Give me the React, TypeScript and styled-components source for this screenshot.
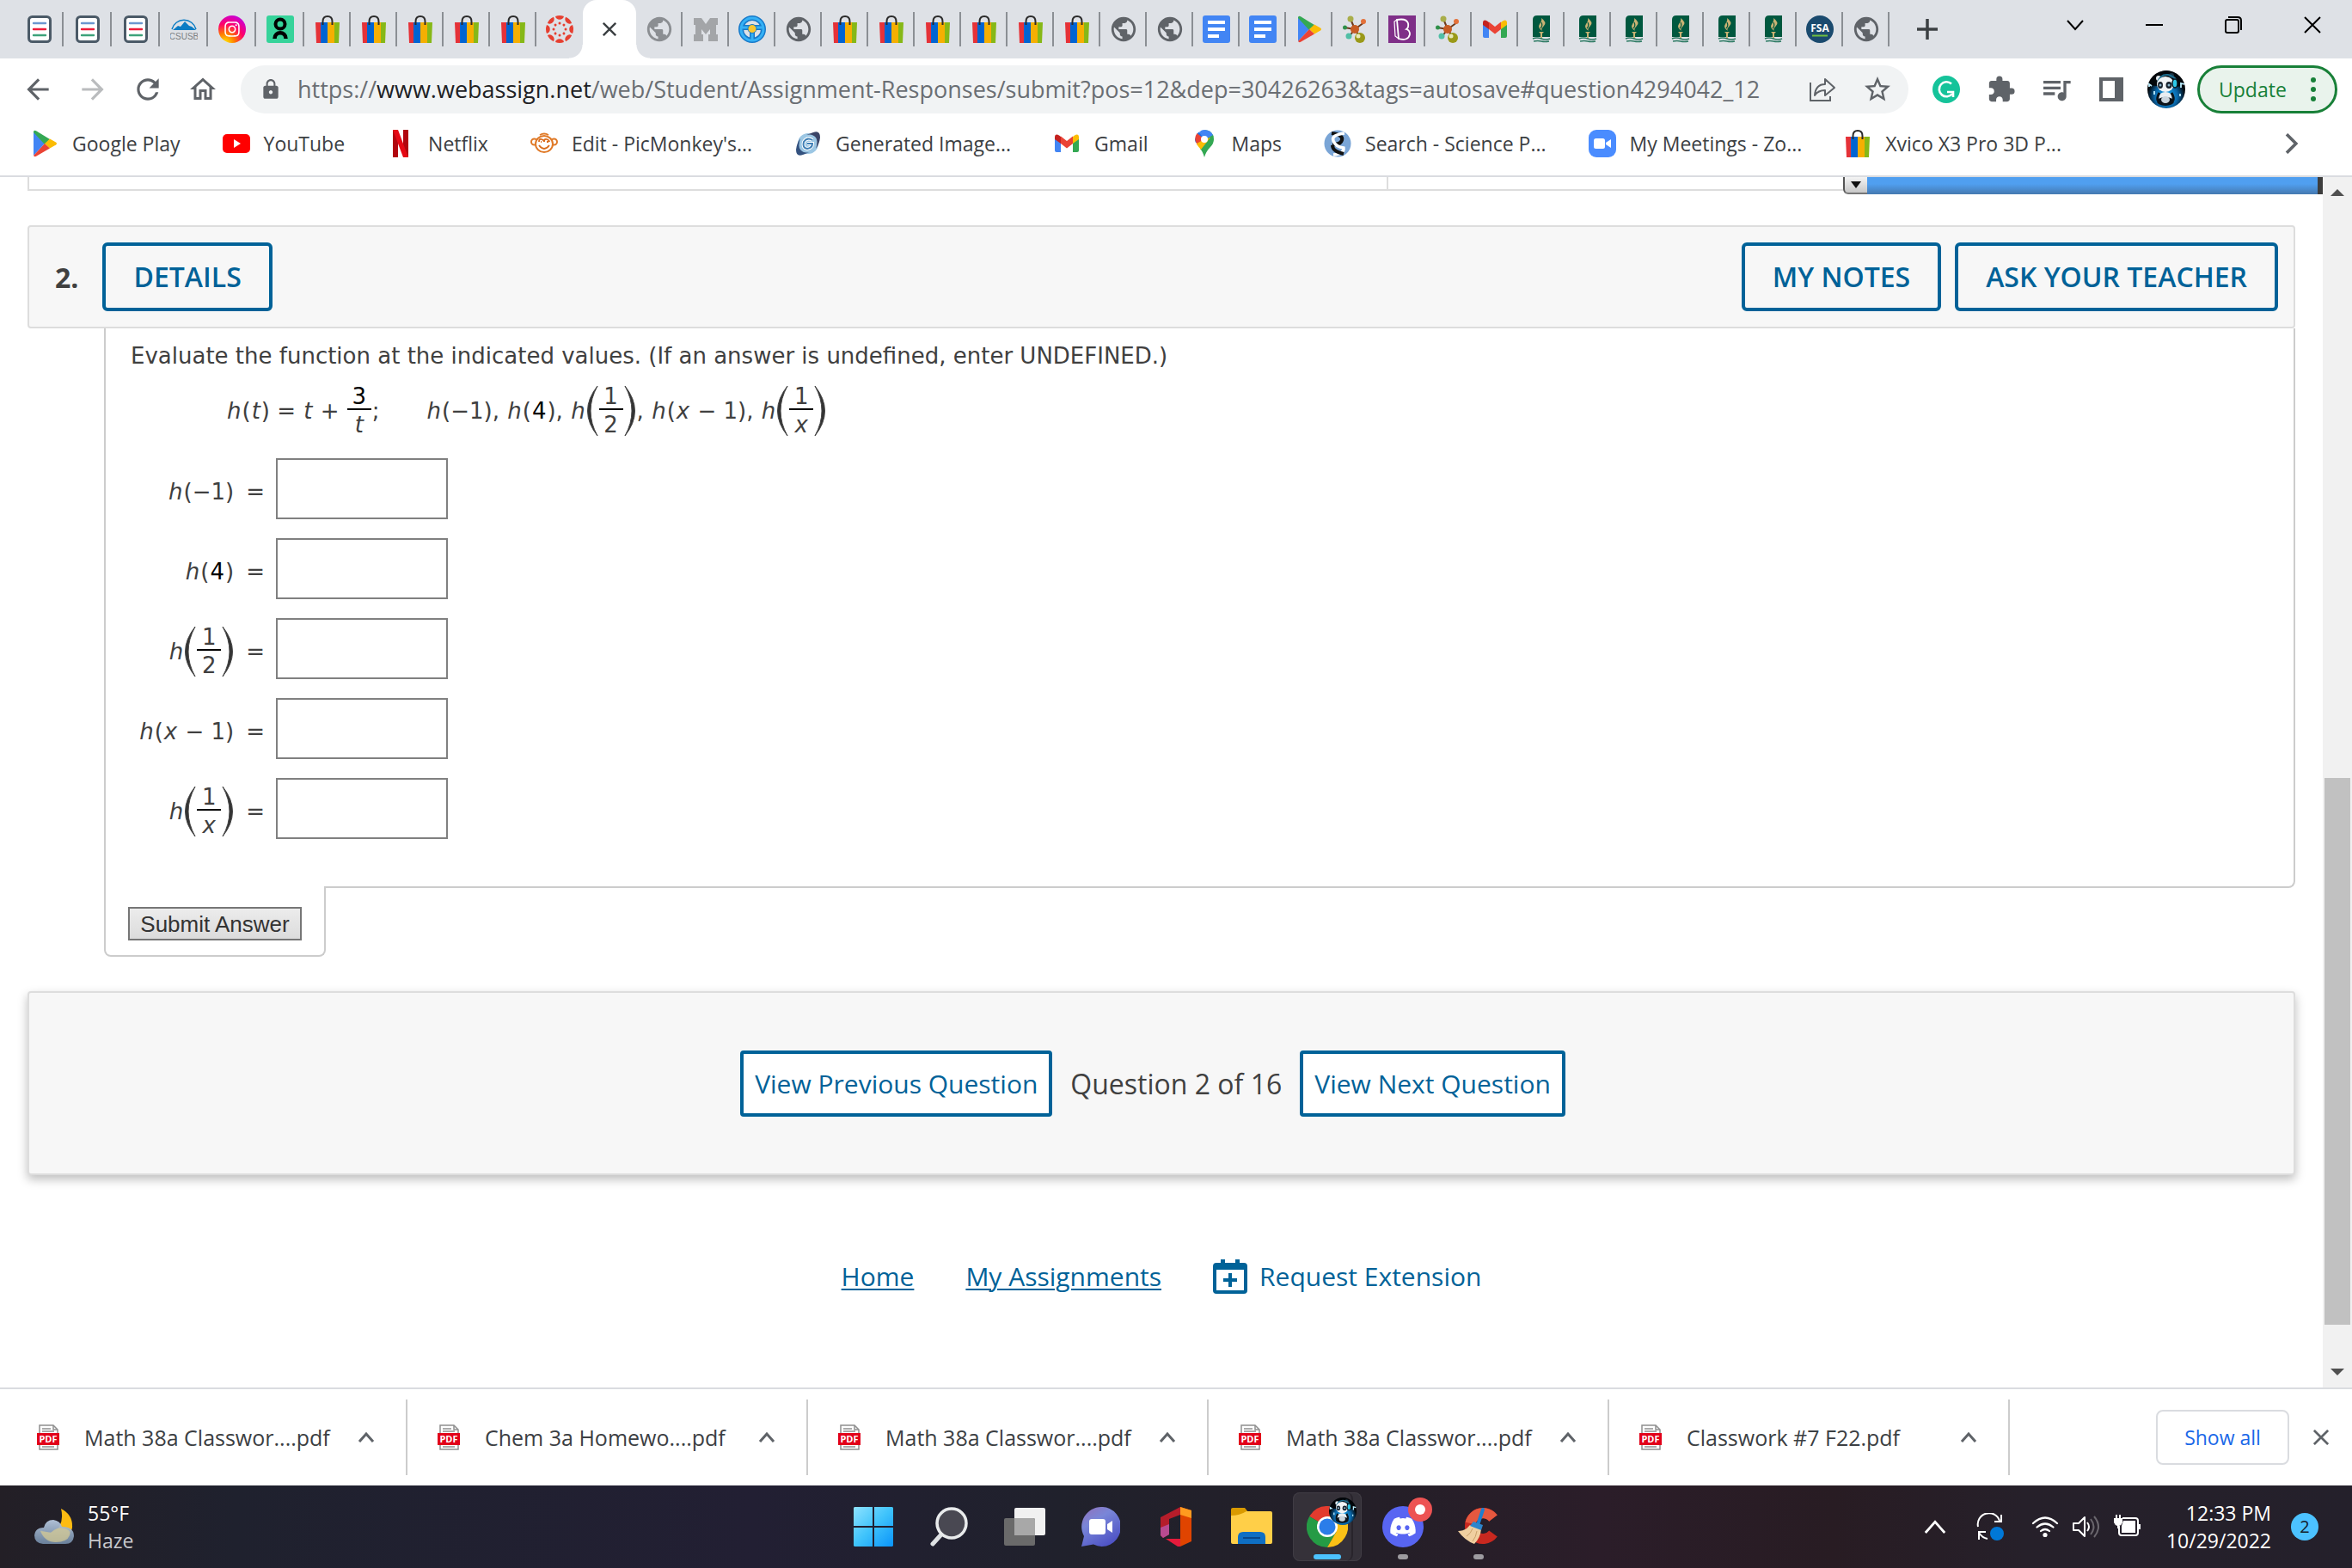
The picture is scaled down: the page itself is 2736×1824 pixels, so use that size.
import React from "react";
import styled, { createGlobalStyle } from "styled-components";
import {
  MdArrowBack,
  MdArrowForward,
  MdExtension,
  MdLock,
  MdOutlineHome,
  MdPublic,
  MdQueueMusic,
  MdRefresh,
  MdStarBorder,
} from "react-icons/md";
import { FaDiscord, FaInstagram } from "react-icons/fa6";

const ui = `"Open Sans", "Noto Sans", sans-serif`;
const math = `"DejaVu Sans", sans-serif`;
const blue = "#006298";
const ink = "#404040";
const chromeGrey = "#5f6368";

const GlobalStyle = createGlobalStyle`
  *, *::before, *::after { box-sizing: border-box; }
  body { margin: 0; background: #fff; font-family: ${ui}; }
  button { font: inherit; color: inherit; background: none; border: 0; padding: 0; margin: 0; }
  svg { display: block; flex: none; }
`;

/* ---------- icons ---------- */

const Svg = ({ size = 32, box = 32, children }: { size?: number; box?: number; children: React.ReactNode }) => (
  <svg width={size} height={size} viewBox={`0 0 ${box} ${box}`} fill="none" aria-hidden="true">
    {children}
  </svg>
);

const ListIcon = () => (
  <Svg>
    <rect x="3.5" y="1.5" width="25" height="29" rx="4" fill="#fff" stroke="#4b5a67" strokeWidth="3" />
    <path d="M9 9h14" stroke="#6c97cf" strokeWidth="2.4" strokeLinecap="round" />
    <path d="M9 16h14" stroke="#ee1c3a" strokeWidth="2.4" strokeLinecap="round" />
    <path d="M9 23h14" stroke="#3da27a" strokeWidth="2.4" strokeLinecap="round" />
  </Svg>
);
const CsusbIcon = () => (
  <Svg>
    <path d="M2 16A14.5 14.5 0 0 1 30 16" stroke="#0b7cc4" strokeWidth="1.5" />
    <path d="M3 17L9 12l3 1 5-6 5 5 3 1 5 4Z" fill="#0b7cc4" />
    <text x="16" y="28" fontSize="10" textAnchor="middle" fontFamily="Liberation Sans Narrow, Liberation Sans" fill="#7c7f83">CSUSB</text>
  </Svg>
);
const InstaBadge = styled.span`
  display: grid;
  place-items: center;
  width: 32px;
  height: 32px;
  border-radius: 50%;
  color: #fff;
  font-size: 20px;
  background: radial-gradient(circle at 25% 100%, #ffd600 5%, #ff7a00 28%, #ff0069 55%, #d300c5 80%, #7638fa 100%);
`;
const KeyIcon = () => (
  <Svg>
    <rect width="32" height="32" rx="3" fill="#36d39a" />
    <circle cx="16" cy="10" r="5.5" stroke="#000" strokeWidth="4" />
    <path d="M9.5 27c0-9 13-9 13 0" stroke="#000" strokeWidth="4.5" />
  </Svg>
);
const BagIcon = () => (
  <Svg>
    <path d="M10.5 12V7q0-6 5.500-6t5.500 6v5" stroke="#2b2b2b" strokeWidth="2" />
    <path d="M2 8h7v24H3Z" fill="#e53238" />
    <path d="M8 8h8v24H8Z" fill="#0064d2" />
    <path d="M16 8h8v24h-8Z" fill="#f5af02" />
    <path d="M24 8h6l-1 24h-5Z" fill="#86b817" />
    <path d="M10.5 8v3M21.5 8v3" stroke="#2b2b2b" strokeWidth="2" />
  </Svg>
);
const CanvasIcon = () => (
  <Svg>
    {[0, 45, 90, 135, 180, 225, 270, 315].map((a) => (
      <g key={a} transform={`rotate(${a} 16 16)`} fill="#e63f30">
        <path d="M11 1Q16-1 21 1A5.200 5.200 0 0 1 11 1Z" />
        <circle cx="16" cy="9" r="1.5" />
      </g>
    ))}
  </Svg>
);
const GlobeIcon = ({ faded }: { faded?: boolean }) => <MdPublic size={34} color={faded ? "#8b8e92" : chromeGrey} />;
const BlockMIcon = () => (
  <Svg>
    <path d="M2 3h9l5 7 5-7h9v8h-2v11h2v8H19v-8h2v-6l-5 6-5-6v6h2v8H2v-8h2V11H2Z" fill="#a3a5a8" />
  </Svg>
);
const WheelIcon = () => (
  <Svg>
    <circle cx="16" cy="16" r="13" stroke="#1779c9" strokeWidth="6" />
    <path d="M4 14h24M16 17v12" stroke="#1779c9" strokeWidth="6" />
    <circle cx="16" cy="16" r="13" stroke="#35b1f5" strokeWidth="3" />
    <path d="M4 14h24M16 17v12" stroke="#35b1f5" strokeWidth="3" />
    <circle cx="16" cy="15.5" r="5" fill="#f9c62f" stroke="#1779c9" />
  </Svg>
);
const DocsIcon = () => (
  <Svg>
    <rect width="32" height="32" rx="3" fill="#4285f4" />
    <path d="M6 8h20M6 16h20M6 24h13" stroke="#fff" strokeWidth="4" />
  </Svg>
);
const PlayIcon = () => (
  <Svg>
    <path d="M3 2v28L16 16Z" fill="#4285f4" />
    <path d="M3 2q1-2 3.500-.5L22 11l-6 6L3 3Z" fill="#34a853" />
    <path d="M22 10.500l7 4q2 1.500 0 3l-7 4L16 16Z" fill="#fbbc04" />
    <path d="M3 30q1 2 3.500.5L22 21.500 16 16Z" fill="#ea4335" />
  </Svg>
);
const MoleculeIcon = () => (
  <Svg>
    <path d="M10 4l5 12M26 8l-11 8M3 14l12 2M8 25l7-9 6 9" stroke="#6d3a1c" strokeWidth="2" />
    <circle cx="10" cy="4" r="3.500" fill="#a9ae4a" />
    <circle cx="25" cy="7" r="3" fill="#e4713a" />
    <circle cx="3.500" cy="14" r="2.500" fill="#2f8f49" />
    <circle cx="15" cy="16" r="5" fill="#c75b24" />
    <circle cx="8" cy="24" r="3.500" fill="#51bfa6" />
    <circle cx="21" cy="26" r="6" fill="#9a9918" />
    <circle cx="19" cy="24" r="2.500" fill="#e8e8b8" />
  </Svg>
);
const BIcon = () => (
  <Svg>
    <rect width="32" height="32" fill="#7f2f88" />
    <path d="M10 5l2 22q11 3 13-5 0-5-4-6 3-2 2-7-2-6-13-4Z" stroke="#fff" strokeWidth="1.800" />
    <path d="M10 5L7 7l1 17 4 3" stroke="#fff" strokeWidth="1.200" />
  </Svg>
);
const GmailIcon = () => (
  <Svg>
    <path d="M2 8v16q0 2 2 2h5V12.500Z" fill="#4285f4" />
    <path d="M30 8v16q0 2-2 2h-5V12.500Z" fill="#34a853" />
    <path d="M23 8l2-1.600Q30 4 30 9v2l-7 5Z" fill="#fbbc04" />
    <path d="M2 9Q2 4 7 6.400l2 1.600v8l-7-5Z" fill="#c5221f" />
    <path d="M9 7.500l7 5.500 7-5.500V16l-7 5.500L9 16Z" fill="#ea4335" />
  </Svg>
);
const TorchIcon = () => (
  <Svg>
    <path d="M6 25V5q0-5 5-5h15v25Z" fill="#00583f" />
    <path d="M16 3q7 5 3 9t-2 6q-6-4-3-8t2-7Z" fill="#c9b273" />
    <path d="M16 8q2 4-1 7" stroke="#00583f" strokeWidth="1.200" />
    <path d="M13 19h6l-2 2v6h-2v-6Z" fill="#c9b273" />
    <path d="M6 27q5-2 10 0t10 0M7 30q5-1 9 0t9 0" stroke="#2c7a63" strokeWidth="1.600" />
  </Svg>
);
const FsaIcon = () => (
  <Svg>
    <circle cx="16" cy="16" r="16" fill="#1a4a6e" />
    <text x="16" y="19" fontSize="12" fontWeight="700" textAnchor="middle" fontFamily="Open Sans" fill="#fff">FSA</text>
    <path d="M7 23.500h18" stroke="#6fbf3f" strokeWidth="2" />
  </Svg>
);
const YoutubeIcon = () => (
  <Svg>
    <rect y="5" width="32" height="22" rx="5" fill="#f00" />
    <path d="M13 11l8 5-8 5Z" fill="#fff" />
  </Svg>
);
const NetflixIcon = () => (
  <Svg>
    <path d="M7 0h6v32H7ZM19 0h6v32h-6Z" fill="#b1060f" />
    <path d="M7 0h6l12 32h-6Z" fill="#e50914" />
  </Svg>
);
const MonkeyIcon = () => (
  <Svg>
    <circle cx="4.500" cy="14" r="3.500" stroke="#e07a28" strokeWidth="2" />
    <circle cx="27.500" cy="14" r="3.500" stroke="#e07a28" strokeWidth="2" />
    <ellipse cx="16" cy="16.500" rx="10" ry="9.500" fill="#fff" stroke="#e07a28" strokeWidth="2" />
    <path d="M10 14q0-4 3-3t3 3q0-4 3-3t3 3M10 18q6 8 12 0M12 14h1M19 14h2" stroke="#d96b1c" strokeWidth="1.800" />
    <path d="M11 6q5-3 10 0" stroke="#e07a28" strokeWidth="2" />
  </Svg>
);
const SwirlIcon = () => (
  <Svg>
    <circle cx="16" cy="16" r="12" fill="#9cc7e4" />
    <path d="M22 3q8-3 8 6-1 8-5 13 3-9 0-13-4-5-11-3Z" fill="#3b4467" />
    <path d="M10 29q-8 3-8-6 1-8 5-13-3 9 0 13 4 5 11 3Z" fill="#34527f" />
    <path d="M21 12q-6-4-10 2-2 7 4 8 6-1 6-6h-6" stroke="#fff" strokeWidth="4" />
    <path d="M21 12q-6-4-10 2-2 7 4 8 6-1 6-6h-6" stroke="#3f7fb5" strokeWidth="2" />
  </Svg>
);
const MapsIcon = () => (
  <Svg>
    <path d="M16 0Q27 1 27 11q0 5-4 9-5 5-7 12-2-7-5-10l9-14Z" fill="#34a853" />
    <path d="M16 0q7 0 10 6l-10 6L9 5l3-4q2-1 4-1Z" fill="#4285f4" />
    <path d="M12 .8L8 4l-3 7q0 2 1 4l10-4-6-8Z" fill="#1a73e8" />
    <path d="M7.500 4Q4 9 6 14l2 4 8-7Z" fill="#ea4335" />
    <path d="M7 16q1 3 5 7l11-14-7 2Z" fill="#fbbc04" />
    <circle cx="16" cy="11" r="4" fill="#fff" />
  </Svg>
);
const DnaIcon = () => (
  <Svg>
    <circle cx="16" cy="16" r="15.500" fill="#7aa5d6" />
    <path d="M9 4q14 2 12 8t-11 4" stroke="#111" strokeWidth="4" />
    <path d="M24 4Q8 6 11 13t12 8q1 7-12 8" stroke="#fff" strokeWidth="3.500" />
    <path d="M10 18q0 7 13 10" stroke="#111" strokeWidth="4" />
  </Svg>
);
const ZoomIcon = () => (
  <Svg>
    <rect width="32" height="32" rx="9" fill="#4a8cff" />
    <rect x="6" y="10" width="13" height="12" rx="2.500" fill="#fff" />
    <path d="M20 15l6-4v10l-6-4Z" fill="#fff" />
  </Svg>
);
const ShareIcon = () => (
  <Svg>
    <path d="M2 8v21h23v-5" stroke={chromeGrey} strokeWidth="2" />
    <path d="M19 4l11 10-11 9v-6q-8 0-12 6 1-13 12-13Z" stroke={chromeGrey} strokeWidth="2" strokeLinejoin="round" />
  </Svg>
);
const GrammarlyIcon = () => (
  <Svg>
    <circle cx="16" cy="16" r="16" fill="#15c39a" />
    <path d="M22 9.500A8.500 8.500 0 1 0 23 21" stroke="#fff" strokeWidth="2.600" />
    <path d="M17 19h7v6" stroke="#fff" strokeWidth="2.600" />
  </Svg>
);
const SidePanelIcon = () => (
  <Svg>
    <path d="M2 2h28v28H2ZM6 6v20h14V6Z" fill={chromeGrey} fillRule="evenodd" />
  </Svg>
);
const PandaIcon = ({ size = 44 }: { size?: number }) => (
  <Svg size={size} box={44}>
    <defs>
      <radialGradient id="glow" cx=".5" cy=".68" r=".5">
        <stop offset="0" stopColor="#18b4ff" />
        <stop offset=".6" stopColor="#0a66a8" />
        <stop offset="1" stopColor="#020609" />
      </radialGradient>
    </defs>
    <circle cx="22" cy="22" r="22" fill="url(#glow)" />
    <path d="M2 17Q6 2 22 0q16 2 20 17-8 3-20 2T2 17Z" fill="#03070b" />
    <path d="M2 19v-3l3 2M39 20v-5l4 1M8 24v4M38 27v3" stroke="#bdefff" strokeWidth="1.800" />
    <circle cx="13" cy="9" r="3" fill="#e6ecf0" />
    <circle cx="28" cy="6" r="3" fill="#1b3547" />
    <path d="M12 14Q15 4 24 5q9 2 10 9" stroke="#1d6d8d" strokeWidth="2" />
    <ellipse cx="21" cy="16" rx="10" ry="9" fill="#f1f4f6" />
    <ellipse cx="15" cy="17" rx="3" ry="4" fill="#17212c" />
    <ellipse cx="25" cy="17" rx="3.500" ry="4" fill="#17212c" />
    <circle cx="15" cy="17" r="1.500" fill="#8fb7cc" />
    <circle cx="25" cy="17" r="1.500" fill="#8fb7cc" />
    <ellipse cx="32" cy="15" rx="3" ry="5" fill="#2ec9e8" stroke="#0b1a24" strokeWidth="1.500" />
    <ellipse cx="21" cy="31" rx="8" ry="6" fill="#e8eef2" />
    <ellipse cx="21" cy="36" rx="10" ry="5" fill="#0c131a" />
    <ellipse cx="21" cy="34" rx="5" ry="4" fill="#c9d4dc" />
    <path d="M14 26q-3 5-2 9M28 26q3 5 2 9" stroke="#0c131a" strokeWidth="3" />
  </Svg>
);
const PdfIcon = () => (
  <Svg>
    <path d="M6 2h16l5 5v23H6Z" fill="#fff" stroke="#8f8f8f" strokeWidth="1.500" />
    <path d="M22 2v5h5M9 6h10M9 9h14M9 27h14" stroke="#8f8f8f" strokeWidth="1.500" />
    <rect x="3" y="11" width="26" height="14" fill="#e2001a" />
    <text x="16" y="22" fontSize="11" fontWeight="700" textAnchor="middle" fontFamily="Open Sans" fill="#fff">PDF</text>
  </Svg>
);
const CalendarPlus = () => (
  <Svg size={40} box={40}>
    <path d="M4 4h5V0h5v4h12V0h5v4h5q4 0 4 4v28q0 4-4 4H4q-4 0-4-4V8Q0 4 4 4ZM4 12v24h32V12Z" fill={blue} fillRule="evenodd" />
    <path d="M20 16v16M12 24h16" stroke={blue} strokeWidth="4" />
  </Svg>
);
const Chevron = ({ dir, size = 20, color = chromeGrey, w = 3 }: { dir: "up" | "down" | "right"; size?: number; color?: string; w?: number }) => (
  <Svg size={size} box={20}>
    <path d={{ up: "M2 15l8-9 8 9", down: "M1 5l9 10 9-10", right: "M5 1l9 9-9 9" }[dir]} stroke={color} strokeWidth={w} />
  </Svg>
);
const Cross = ({ size = 20, color = chromeGrey, w = 3 }: { size?: number; color?: string; w?: number }) => (
  <Svg size={size} box={20}>
    <path d="M1 1l18 18M19 1L1 19" stroke={color} strokeWidth={w} />
  </Svg>
);

/* ---------- tab strip ---------- */

const Browser = styled.div`
  display: flex;
  flex-direction: column;
  min-height: 100vh;
`;
const TabStrip = styled.header`
  display: flex;
  align-items: stretch;
  height: 68px;
  padding-left: 18px;
  background: #dee1e6;
`;
const Tab = styled.button<{ $wide?: boolean; $last?: boolean }>`
  display: flex;
  align-items: center;
  justify-content: center;
  align-self: center;
  flex: none;
  width: ${(p) => (p.$wide ? 56 : 54)}px;
  height: 40px;
  padding-left: 1px;
  border-right: 2px solid ${(p) => (p.$last ? "transparent" : "#8b8f94")};
`;
const ActiveTab = styled.div`
  position: relative;
  display: grid;
  place-items: center;
  width: 62px;
  background: #fff;
  border-radius: 16px 16px 0 0;
  &::before,
  &::after {
    content: "";
    position: absolute;
    bottom: 0;
    width: 16px;
    height: 16px;
  }
  &::before {
    right: 100%;
    background: radial-gradient(circle at 0 0, transparent 15px, #fff 16px);
  }
  &::after {
    left: 100%;
    background: radial-gradient(circle at 100% 0, transparent 15px, #fff 16px);
  }
`;
const NewTab = styled.button`
  display: grid;
  place-items: center;
  width: 88px;
`;
const WindowControls = styled.div`
  display: flex;
  align-items: center;
  margin-left: auto;
  height: 58px;
`;
const WindowButton = styled.button`
  display: grid;
  place-items: center;
  width: 92px;
  height: 58px;
`;

/* ---------- toolbar ---------- */

const Toolbar = styled.div`
  display: flex;
  align-items: center;
  height: 72px;
  padding: 0 17px 0 12px;
  color: ${chromeGrey};
`;
const ToolButton = styled.button<{ $dim?: boolean }>`
  display: grid;
  place-items: center;
  flex: none;
  width: 64px;
  height: 56px;
  color: ${(p) => (p.$dim ? "#babcbe" : chromeGrey)};
`;
const Omnibox = styled.div`
  display: flex;
  align-items: center;
  flex: 1;
  min-width: 0;
  height: 56px;
  margin: 0 12px;
  padding: 0 4px 0 22px;
  border-radius: 28px;
  background: #f1f3f4;
`;
const Url = styled.div`
  flex: 1;
  min-width: 0;
  margin-left: 18px;
  overflow: hidden;
  white-space: nowrap;
  outline: 0;
  font-size: 27px;
  line-height: 40px;
  color: #6a6e73;
  b { font-weight: 400; color: #202124; }
`;
const UpdateButton = styled.button`
  display: flex;
  align-items: center;
  justify-content: space-between;
  width: 163px;
  height: 56px;
  margin-left: 4px;
  padding: 0 15px 0 22px;
  border: 3px solid #188038;
  border-radius: 28px;
  background: #e9f3ec;
  color: #188038;
  font-size: 23px;
`;
const Bookmarks = styled.nav`
  display: flex;
  align-items: center;
  gap: 49px;
  height: 66px;
  padding: 0 58px 10px 36px;
  border-bottom: 2px solid #dadce0;
`;
const Bookmark = styled.a`
  display: flex;
  align-items: center;
  gap: 16px;
  flex: none;
  color: #3c4043;
  font-size: 23px;
  line-height: 32px;
  text-decoration: none;
  white-space: nowrap;
`;
const Overflow = styled.button`
  margin-left: auto;
`;

/* ---------- page ---------- */

const Viewport = styled.div`
  display: flex;
  flex: 1;
`;
const Page = styled.main`
  flex: 1;
  min-width: 0;
  background: #fff;
  color: ${ink};
`;
const Scrollbar = styled.div`
  display: flex;
  flex-direction: column;
  align-items: center;
  width: 34px;
  background: #f1f1f1;
`;
const ScrollArrow = styled.button`
  display: grid;
  place-items: center;
  width: 34px;
  height: 36px;
`;
const Track = styled.div<{ $share: number }>`
  flex: ${(p) => p.$share};
`;
const Thumb = styled(Track)`
  width: 30px;
  background: #c1c1c1;
`;
const PreviousRow = styled.div`
  display: flex;
  align-items: flex-start;
  height: 20px;
  padding-left: 32px;
`;
const PreviousCell = styled.div<{ $share: number }>`
  flex: ${(p) => p.$share};
  height: 16px;
  border-left: 2px solid #ddd;
  border-bottom: 2px solid #ddd;
`;
const PanelToggle = styled.button`
  display: grid;
  place-items: center;
  width: 28px;
  height: 20px;
  border-left: 2px solid #555;
  border-bottom: 2px solid #777;
  border-bottom-left-radius: 6px;
  background: linear-gradient(#f4f4f4, #c8c8c8);
`;
const MediaBar = styled.div`
  flex: none;
  width: 530px;
  height: 20px;
  border-right: 6px solid #3d3d3d;
  background: linear-gradient(#509ff0 40%, #4579b0);
`;
const Content = styled.div`
  padding: 36px 32px 0;
`;
const QuestionHeader = styled.div`
  display: flex;
  align-items: center;
  gap: 16px;
  height: 120px;
  padding: 0 18px 0 30px;
  border: 2px solid #ddd;
  border-radius: 4px;
  background: #f7f7f7;
`;
const QuestionNumber = styled.span`
  flex: 1;
  display: flex;
  align-items: center;
  gap: 28px;
  font-size: 32px;
  font-weight: 700;
`;
const HeaderButton = styled.button`
  height: 80px;
  padding: 0 32px 2px;
  border: 4px solid ${blue};
  border-radius: 6px;
  color: ${blue};
  font-size: 32px;
  font-weight: 600;
  white-space: nowrap;
`;
const QuestionBody = styled.section`
  margin-left: 89px;
  padding: 12px 29px 55px;
  border: 2px solid #ccc;
  border-top: 0;
  border-radius: 0 0 8px 0;
  font-family: ${math};
  font-size: 26px;
  line-height: 28px;
`;
const Prompt = styled.p`
  margin: 0;
  line-height: 40px;
`;
const Line = styled.div`
  display: flex;
  align-items: center;
  gap: 1px;
  white-space: pre;
  i { font-style: italic; }
  b { font-weight: 400; color: #000; }
`;
const Equation = styled(Line)`
  margin: 13px 0 25px;
  padding-left: 112px;
`;
const Second = styled(Line)`
  margin-left: 54px;
`;
const FracBox = styled.span`
  display: flex;
  flex-direction: column;
  align-items: center;
  width: 28px;
`;
const Over = styled.span`
  width: 28px;
  text-align: center;
  border-bottom: 2px solid #000;
`;
const Under = styled.span`
  padding-top: 3px;
`;
const Answers = styled.div`
  display: flex;
  flex-direction: column;
  gap: 22px;
`;
const AnswerRow = styled.div`
  display: flex;
  align-items: center;
  gap: 13px;
`;
const AnswerLabel = styled.label`
  display: flex;
  align-items: center;
  justify-content: flex-end;
  gap: 14px;
  width: 156px;
  padding-top: 6px;
`;
const AnswerInput = styled.input`
  width: 200px;
  height: 71px;
  padding: 0 8px;
  border: 2px solid #808080;
  border-radius: 0;
  background: #fff;
  font: 26px ${math};
`;
const SubmitTab = styled.div`
  position: relative;
  width: 258px;
  margin: -2px 0 0 89px;
  padding: 24px 26px 17px;
  border: 2px solid #ccc;
  border-top: 0;
  border-radius: 0 0 8px 8px;
  background: #fff;
`;
const SubmitButton = styled.button`
  display: block;
  width: 202px;
  height: 39px;
  border: 2px solid #767676;
  background: linear-gradient(#ececec, #dcdcdc);
  color: #333;
  font: 26px/32px "Liberation Sans", sans-serif;
  white-space: nowrap;
`;
const Pager = styled.div`
  display: flex;
  align-items: center;
  justify-content: center;
  gap: 21px;
  height: 214px;
  margin-top: 40px;
  padding-right: 20px;
  border: 2px solid #ddd;
  border-radius: 4px;
  background: #f7f7f7;
  box-shadow: 0 5px 12px rgba(0, 0, 0, 0.26);
  font-size: 32px;
`;
const PagerButton = styled.button`
  height: 77px;
  padding: 0 13px;
  border: 4px solid ${blue};
  border-radius: 4px;
  background: #fff;
  color: ${blue};
  font-size: 30px;
`;
const FooterLinks = styled.nav`
  display: flex;
  align-items: center;
  justify-content: center;
  gap: 60px;
  padding: 96px 0 48px;
`;
const FooterLink = styled.a<{ $plain?: boolean }>`
  display: flex;
  align-items: center;
  gap: 14px;
  color: ${blue};
  font-size: 30px;
  line-height: 44px;
  text-decoration: ${(p) => (p.$plain ? "none" : "underline")};
  text-decoration-thickness: 2px;
  text-underline-offset: 3px;
`;

/* ---------- downloads ---------- */

const Downloads = styled.section`
  display: flex;
  align-items: center;
  height: 114px;
  padding: 0 27px 0 8px;
  border-top: 2px solid #dadce0;
  background: #fff;
`;
const Download = styled.div`
  display: flex;
  align-items: center;
  width: 466px;
  height: 88px;
  padding: 0 36px 0 32px;
  border-right: 2px solid #ccc;
`;
const FileButton = styled.button`
  display: flex;
  align-items: center;
  gap: 26px;
  flex: 1;
  color: #3c4043;
  font-size: 25px;
  line-height: 32px;
  white-space: nowrap;
`;
const ShowAll = styled.button`
  width: 155px;
  height: 64px;
  margin: 0 28px 0 auto;
  border: 2px solid #dadce0;
  border-radius: 8px;
  color: #1a68e8;
  font-size: 23px;
  font-weight: 500;
`;

/* ---------- taskbar ---------- */

const Taskbar = styled.footer`
  display: grid;
  grid-template-columns: 1fr auto 1fr;
  align-items: center;
  height: 96px;
  padding: 0 39px;
  color: #fff;
  line-height: 32px;
  background: linear-gradient(90deg, #231f26 0%, #1f212e 10%, #221f33 32%, #20212c 45%, #241f28 58%, #2b1d29 68%, #281c23 78%, #26202a 86%, #24202b 100%);
`;
const Weather = styled.button`
  display: flex;
  align-items: center;
  gap: 15px;
  font-size: 23px;
  text-align: left;
`;
const WeatherText = styled.span`
  display: grid;
  span { color: #c8c8cc; }
`;
const Apps = styled.div`
  display: flex;
  gap: 8px;
`;
const AppButton = styled.button<{ $active?: boolean; $running?: boolean }>`
  position: relative;
  display: grid;
  place-items: center;
  width: 80px;
  height: 80px;
  border-radius: 8px;
  background: ${(p) => (p.$active ? "#353139" : "none")};
  box-shadow: ${(p) => (p.$active ? "inset 0 0 0 1px #403c44" : "none")};
  &::before {
    content: "";
    display: ${(p) => (p.$active ? "block" : "none")};
    position: absolute;
    inset: 0 10px 0 0;
    border-right: 2px solid #28242b;
    border-radius: 8px;
  }
  &::after {
    content: "";
    display: ${(p) => (p.$active || p.$running ? "block" : "none")};
    position: absolute;
    bottom: 2px;
    width: ${(p) => (p.$active ? 32 : 12)}px;
    height: 6px;
    border-radius: 3px;
    background: ${(p) => (p.$active ? "#4cc2ff" : "#9d9ba0")};
  }
`;
const AppBadge = styled.span`
  position: absolute;
  top: 6px;
  right: 6px;
`;
const Tray = styled.div`
  display: flex;
  align-items: center;
  justify-content: flex-end;
`;
const TrayGroup = styled.div<{ $gap: number }>`
  display: flex;
  align-items: center;
  gap: ${(p) => p.$gap}px;
  margin-right: ${(p) => p.$gap * 2 - 32 > 20 ? 32 : 29}px;
`;
const Clock = styled.div`
  font-size: 23px;
  text-align: right;
`;
const CountBadge = styled.span`
  display: grid;
  place-items: center;
  width: 32px;
  height: 32px;
  margin-left: 23px;
  border-radius: 50%;
  background: #4cc2ff;
  color: #14202a;
  font-size: 20px;
`;
const DiscordDisc = styled.span`
  display: grid;
  place-items: center;
  width: 48px;
  height: 48px;
  border-radius: 50%;
  background: #5865f2;
`;

/* ---------- math ---------- */

const Paren = ({ right }: { right?: boolean }) => (
  <svg width="14" height="60" viewBox="0 0 14 60" fill="none" aria-hidden="true">
    <path d={right ? "M1 1Q24 30 1 59Q17 30 1 1Z" : "M13 1Q-10 30 13 59Q-3 30 13 1Z"} fill="#333" stroke="#444" strokeWidth="1" />
  </svg>
);
const Frac = ({ top, bottom }: { top: React.ReactNode; bottom: React.ReactNode }) => (
  <FracBox>
    <Over>{top}</Over>
    <Under>{bottom}</Under>
  </FracBox>
);
const HFrac = ({ bottom }: { bottom: React.ReactNode }) => (
  <>
    <i>h</i>
    <Paren />
    <Frac top="1" bottom={bottom} />
    <Paren right />
  </>
);

const answers = [
  <><i>h</i>(−1)</>,
  <><i>h</i>(<b>4</b>)</>,
  <HFrac bottom="2" />,
  <><i>h</i>(<i>x</i> − 1)</>,
  <HFrac bottom={<i>x</i>} />,
];

/* ---------- data ---------- */

type Named = [string, React.ReactNode];
const rep = (n: number, item: Named): Named[] => Array.from({ length: n }, () => item);

const pinned: Named[] = [...rep(3, ["Notes", <ListIcon />]), ["CSUSB", <CsusbIcon />], ["Instagram", <InstaBadge><FaInstagram /></InstaBadge>], ["Key", <KeyIcon />]];
const leftTabs: Named[] = [...rep(5, ["eBay", <BagIcon />]), ["Canvas", <CanvasIcon />]];
const rightTabs: Named[] = [
  ["Page", <GlobeIcon faded />],
  ["M", <BlockMIcon />],
  ["Driving", <WheelIcon />],
  ["Page", <GlobeIcon />],
  ...rep(6, ["eBay", <BagIcon />]),
  ...rep(2, ["Page", <GlobeIcon />]),
  ...rep(2, ["Docs", <DocsIcon />]),
  ["Google Play", <PlayIcon />],
  ["Molecules", <MoleculeIcon />],
  ["B", <BIcon />],
  ["Molecules", <MoleculeIcon />],
  ["Gmail", <GmailIcon />],
  ...rep(6, ["Sac State", <TorchIcon />]),
  ["FSA", <FsaIcon />],
  ["Page", <GlobeIcon />],
];
const bookmarks: Named[] = [
  ["Google Play", <PlayIcon />],
  ["YouTube", <YoutubeIcon />],
  ["Netflix", <NetflixIcon />],
  ["Edit - PicMonkey's...", <MonkeyIcon />],
  ["Generated Image...", <SwirlIcon />],
  ["Gmail", <GmailIcon />],
  ["Maps", <MapsIcon />],
  ["Search - Science P...", <DnaIcon />],
  ["My Meetings - Zo...", <ZoomIcon />],
  ["Xvico X3 Pro 3D P...", <BagIcon />],
];
const files = ["Math 38a Classwor....pdf", "Chem 3a Homewo....pdf", "Math 38a Classwor....pdf", "Math 38a Classwor....pdf", "Classwork #7 F22.pdf"];

/* ---------- taskbar drawings ---------- */

const WeatherIcon = () => (
  <Svg size={48} box={48}>
    <defs>
      <linearGradient id="cloud" x1="0" y1="0" x2="0" y2="1">
        <stop offset="0" stopColor="#b9cbe2" />
        <stop offset="1" stopColor="#6f87a3" />
      </linearGradient>
    </defs>
    <path d="M32 3Q46 10 45 25 43 36 32 40 14 43 8 28 22 34 30 24 35 15 32 3Z" fill="#fdbb12" />
    <path d="M11 44Q1 43 1 34q1-9 11-9 2-9 11-9 8 1 10 8 14 0 14 11-1 9-10 9Z" fill="url(#cloud)" opacity=".93" />
    <path d="M8 29q8 1 12 2 8-8 16-5 8 2 6 8-3 8-16 8T8 29Z" fill="#d0c795" opacity=".75" />
  </Svg>
);
const StartIcon = () => (
  <Svg size={46} box={46}>
    <defs>
      <linearGradient id="win" x1="0" y1="0" x2="46" y2="46" gradientUnits="userSpaceOnUse">
        <stop offset="0" stopColor="#8ee2ff" />
        <stop offset=".5" stopColor="#3fc3fb" />
        <stop offset="1" stopColor="#0a94fa" />
      </linearGradient>
    </defs>
    <path d="M1 0h21v22H0V1ZM24 0h21l1 1v21H24ZM0 24h22v22H1l-1-1ZM24 24h22v21l-1 1H24Z" fill="url(#win)" />
  </Svg>
);
const SearchIcon = () => (
  <Svg size={46} box={46}>
    <path d="M14 32L4 43" stroke="#dfe2e4" strokeWidth="5" strokeLinecap="round" />
    <circle cx="26" cy="19" r="17" fill="#494852" stroke="#e9ebec" strokeWidth="3.500" />
  </Svg>
);
const TaskViewIcon = () => (
  <Svg size={48} box={48}>
    <rect x="12" y="2" width="36" height="32" rx="2" fill="#f1f1f1" />
    <rect x="0" y="14" width="36" height="32" rx="2" fill="#6a6a6a" />
    <path d="M12 14h22q2 0 2 2v18H12Z" fill="#a8a8a8" />
  </Svg>
);
const ChatIcon = () => (
  <Svg size={46} box={46}>
    <defs>
      <linearGradient id="chat" x1="6" y1="0" x2="34" y2="46" gradientUnits="userSpaceOnUse">
        <stop offset="0" stopColor="#8f72bd" />
        <stop offset=".35" stopColor="#7986d8" />
        <stop offset="1" stopColor="#4b4fc4" />
      </linearGradient>
    </defs>
    <path d="M24 0a22 23 0 1 1-9 43.500L1 46l3-12A23 23 0 0 1 24 0Z" fill="url(#chat)" />
    <rect x="10" y="14" width="19" height="18" rx="3" fill="#fff" />
    <path d="M31 20l6-4v14l-6-4Z" fill="#fff" />
  </Svg>
);
const OfficeIcon = () => (
  <Svg size={46} box={46}>
    <path d="M5 12L28 0v9l-13 5v18l-7 4-3-3Z" fill="#b51d2a" />
    <path d="M5 24l10-4v12l-7 4-3-3Z" fill="#b94a90" />
    <path d="M28 0l13 4v36l-13 6Z" fill="#e04400" />
    <path d="M28 0l13 4v9l-13-4Z" fill="#ff9a1f" />
    <path d="M11 37h17v9h-3Z" fill="#e51b3c" />
  </Svg>
);
const FolderIcon = () => (
  <Svg size={48} box={48}>
    <path d="M0 4q0-2 2-2h14l4 5v8H0Z" fill="#d99a00" />
    <path d="M0 11q10 0 18-5h28q2 0 2 2v34q0 2-2 2H2q-2 0-2-2Z" fill="#ffcf48" />
    <path d="M8 44V36q0-6 6-6h20q6 0 6 6v8Z" fill="#0f6fc4" />
    <path d="M14 37h20" stroke="#08478a" strokeWidth="2" />
  </Svg>
);
const ChromeIcon = () => (
  <Svg size={48} box={48}>
    <path d="M24 24L3.200 12A24 24 0 0 1 44.800 12H24Z" fill="#e33b2e" />
    <path d="M24 24L3.200 12A24 24 0 0 0 24 48L34.400 30Z" fill="#259b45" />
    <path d="M24 24l10.400 6L24 48A24 24 0 0 0 44.800 12H24Z" fill="#fbc116" />
    <circle cx="24" cy="24" r="12" fill="#fff" />
    <circle cx="24" cy="24" r="9.500" fill="#2b7de9" />
  </Svg>
);
const CleanerIcon = () => (
  <Svg size={48} box={48}>
    <path d="M41 14A15 15 0 1 0 41 32" stroke="#c9281f" strokeWidth="12" />
    <path d="M41 14A15 15 0 0 0 14.500 20" stroke="#e5583f" strokeWidth="12" />
    <path d="M29 4L23 22" stroke="#1c7fd0" strokeWidth="4" strokeLinecap="round" />
    <path d="M14 22l13 5q-1 10-8 17Q8 40 0 29q9 0 14-7Z" fill="#f0cfa0" />
    <path d="M10 35q5-3 7-9M17 41q4-5 5-12" stroke="#c9a06a" strokeWidth="1" />
    <path d="M18 18l11 4-2 6-13-5Z" fill="#2d85cc" />
  </Svg>
);
const SyncIcon = () => (
  <Svg>
    <path d="M2 16A13 13 0 0 1 27 9M29 2v8h-8M3 31V22h8M3 23q4 6 10 7" stroke="#fff" strokeWidth="2" />
    <circle cx="24" cy="24" r="8" fill="#0078d7" />
  </Svg>
);
const WifiIcon = () => (
  <Svg>
    <path d="M2 12q14-13 28 0M6.500 16.500q9.500-8 19 0M11 21q5-4 10 0" stroke="#fff" strokeWidth="2.200" strokeLinecap="round" />
    <circle cx="16" cy="25.500" r="2.600" fill="#fff" />
  </Svg>
);
const SpeakerIcon = () => (
  <Svg>
    <path d="M1 12h6l7-7v22l-7-7H1Z" stroke="#fff" strokeWidth="2" strokeLinejoin="round" />
    <path d="M17 11q4 5 0 10" stroke="#fff" strokeWidth="2" />
    <path d="M21 7q7 9 0 18M25 4q10 12 0 24" stroke="#6b676e" strokeWidth="2" />
  </Svg>
);
const BatteryIcon = () => (
  <Svg>
    <path d="M10 6h15q3 0 3 3v14q0 3-3 3H9q-3 0-3-3v-8" stroke="#fff" strokeWidth="2" />
    <path d="M11 9h14v14H9v-8Z" fill="#fff" />
    <path d="M28 13h3v6h-3ZM0 6h10v5q-1 3-4 4v3H4v-3q-3-1-4-4ZM2 2h2v5H2ZM6 2h2v5H6Z" fill="#fff" />
  </Svg>
);
const RecordBadge = () => (
  <Svg size={28} box={28}>
    <circle cx="14" cy="14" r="14" fill="#ed5353" />
    <circle cx="14" cy="14" r="6" fill="#fff" />
  </Svg>
);

/* ---------- app ---------- */

export default function App() {
  return (
    <Browser>
      <GlobalStyle />
      <TabStrip>
        {pinned.map(([name, icon], i) => (
          <Tab key={i} aria-label={name} $wide>{icon}</Tab>
        ))}
        {leftTabs.map(([name, icon], i) => (
          <Tab key={i} aria-label={name} $last={i === leftTabs.length - 1}>{icon}</Tab>
        ))}
        <ActiveTab>
          <button aria-label="Close tab"><Cross size={16} w={3} color="#3c4043" /></button>
        </ActiveTab>
        {rightTabs.map(([name, icon], i) => (
          <Tab key={i} aria-label={name}>{icon}</Tab>
        ))}
        <NewTab aria-label="New tab">
          <Svg size={24} box={24}><path d="M12 0v24M0 12h24" stroke="#3c4043" strokeWidth="3.500" /></Svg>
        </NewTab>
        <WindowControls>
          <WindowButton aria-label="Search tabs"><Chevron dir="down" color="#000" w={2} /></WindowButton>
          <WindowButton aria-label="Minimize"><Svg size={20} box={20}><path d="M0 10h20" stroke="#000" strokeWidth="2" /></Svg></WindowButton>
          <WindowButton aria-label="Restore">
            <Svg size={20} box={20}>
              <rect x="1" y="4" width="15" height="15" rx="2" stroke="#000" strokeWidth="2" />
              <path d="M4 1h11q4 0 4 4v11" stroke="#000" strokeWidth="2" />
            </Svg>
          </WindowButton>
          <WindowButton aria-label="Close"><Cross color="#000" w={2} /></WindowButton>
        </WindowControls>
      </TabStrip>

      <Toolbar>
        <ToolButton aria-label="Back"><MdArrowBack size={38} /></ToolButton>
        <ToolButton aria-label="Forward" $dim><MdArrowForward size={38} /></ToolButton>
        <ToolButton aria-label="Reload"><MdRefresh size={38} /></ToolButton>
        <ToolButton aria-label="Home"><MdOutlineHome size={36} /></ToolButton>
        <Omnibox>
          <MdLock size={26} />
          <Url role="textbox" aria-label="Address" contentEditable suppressContentEditableWarning spellCheck={false}>
            https://<b>www.webassign.net</b>/web/Student/Assignment-Responses/submit?pos=12&amp;dep=30426263&amp;tags=autosave#question4294042_12
          </Url>
          <ToolButton aria-label="Share"><ShareIcon /></ToolButton>
          <ToolButton aria-label="Bookmark"><MdStarBorder size={36} /></ToolButton>
        </Omnibox>
        <ToolButton aria-label="Grammarly"><GrammarlyIcon /></ToolButton>
        <ToolButton aria-label="Extensions"><MdExtension size={34} /></ToolButton>
        <ToolButton aria-label="Media"><MdQueueMusic size={40} /></ToolButton>
        <ToolButton aria-label="Side panel"><SidePanelIcon /></ToolButton>
        <ToolButton aria-label="Profile"><PandaIcon /></ToolButton>
        <UpdateButton>
          Update
          <Svg size={28} box={28}><circle cx="18" cy="3" r="3" fill="#188038" /><circle cx="18" cy="14" r="3" fill="#188038" /><circle cx="18" cy="25" r="3" fill="#188038" /></Svg>
        </UpdateButton>
      </Toolbar>

      <Bookmarks>
        {bookmarks.map(([name, icon]) => (
          <Bookmark key={name} href="#">{icon}{name}</Bookmark>
        ))}
        <Overflow aria-label="More bookmarks"><Chevron dir="right" size={24} /></Overflow>
      </Bookmarks>

      <Viewport>
        <Page>
          <PreviousRow>
            <PreviousCell $share={1582} />
            <PreviousCell $share={530} />
            <PanelToggle aria-label="Toggle panel">
              <Svg size={12} box={12}><path d="M0 2h12L6 10Z" fill="#111" /></Svg>
            </PanelToggle>
            <MediaBar />
          </PreviousRow>
          <Content>
            <QuestionHeader>
              <QuestionNumber>
                2.
                <HeaderButton>DETAILS</HeaderButton>
              </QuestionNumber>
              <HeaderButton>MY NOTES</HeaderButton>
              <HeaderButton>ASK YOUR TEACHER</HeaderButton>
            </QuestionHeader>
            <QuestionBody>
              <Prompt>Evaluate the function at the indicated values. (If an answer is undefined, enter UNDEFINED.)</Prompt>
              <Equation>
                <i>h</i>(<i>t</i>) = <i>t</i> + <Frac top={<b>3</b>} bottom={<i>t</i>} />;
                <Second>
                  <i>h</i>(−1), <i>h</i>(<b>4</b>), <HFrac bottom="2" />, <i>h</i>(<i>x</i> − 1), <HFrac bottom={<i>x</i>} />
                </Second>
              </Equation>
              <Answers>
                {answers.map((label, i) => (
                  <AnswerRow key={i}>
                    <AnswerLabel htmlFor={`answer-${i}`}>
                      <Line>{label}</Line>
                      <span>=</span>
                    </AnswerLabel>
                    <AnswerInput id={`answer-${i}`} type="text" />
                  </AnswerRow>
                ))}
              </Answers>
            </QuestionBody>
            <SubmitTab>
              <SubmitButton>Submit Answer</SubmitButton>
            </SubmitTab>
            <Pager>
              <PagerButton>View Previous Question</PagerButton>
              <span>Question 2 of 16</span>
              <PagerButton>View Next Question</PagerButton>
            </Pager>
            <FooterLinks>
              <FooterLink href="#">Home</FooterLink>
              <FooterLink href="#">My Assignments</FooterLink>
              <FooterLink href="#" $plain><CalendarPlus />Request Extension</FooterLink>
            </FooterLinks>
          </Content>
        </Page>
        <Scrollbar>
          <ScrollArrow aria-label="Scroll up"><Svg size={16} box={16}><path d="M0 12L8 4l8 8Z" fill="#505050" /></Svg></ScrollArrow>
          <Track $share={663} />
          <Thumb $share={636} />
          <Track $share={37} />
          <ScrollArrow aria-label="Scroll down"><Svg size={16} box={16}><path d="M0 4l8 8 8-8Z" fill="#505050" /></Svg></ScrollArrow>
        </Scrollbar>
      </Viewport>

      <Downloads>
        {files.map((name, i) => (
          <Download key={i}>
            <FileButton><PdfIcon />{name}</FileButton>
            <button aria-label="File options"><Chevron dir="up" /></button>
          </Download>
        ))}
        <ShowAll>Show all</ShowAll>
        <button aria-label="Close downloads"><Cross size={18} /></button>
      </Downloads>

      <Taskbar>
        <Weather>
          <WeatherIcon />
          <WeatherText>55°F<span>Haze</span></WeatherText>
        </Weather>
        <Apps>
          <AppButton aria-label="Start"><StartIcon /></AppButton>
          <AppButton aria-label="Search"><SearchIcon /></AppButton>
          <AppButton aria-label="Task view"><TaskViewIcon /></AppButton>
          <AppButton aria-label="Chat"><ChatIcon /></AppButton>
          <AppButton aria-label="Office"><OfficeIcon /></AppButton>
          <AppButton aria-label="Explorer"><FolderIcon /></AppButton>
          <AppButton aria-label="Chrome" $active><ChromeIcon /><AppBadge><PandaIcon size={32} /></AppBadge></AppButton>
          <AppButton aria-label="Discord" $running><DiscordDisc><FaDiscord size={32} /></DiscordDisc><AppBadge><RecordBadge /></AppBadge></AppButton>
          <AppButton aria-label="Cleaner" $running><CleanerIcon /></AppButton>
        </Apps>
        <Tray>
          <TrayGroup $gap={34}>
            <Chevron dir="up" size={28} color="#fff" w={2} />
            <SyncIcon />
          </TrayGroup>
          <TrayGroup $gap={16}>
            <WifiIcon />
            <SpeakerIcon />
            <BatteryIcon />
          </TrayGroup>
          <Clock>12:33 PM<br />10/29/2022</Clock>
          <CountBadge>2</CountBadge>
        </Tray>
      </Taskbar>
    </Browser>
  );
}
